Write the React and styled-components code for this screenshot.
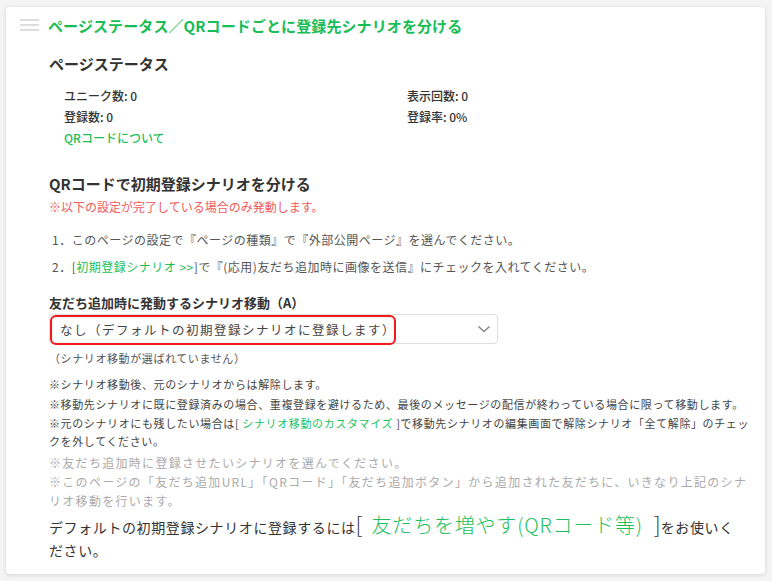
import React from 'react';
import styled, { createGlobalStyle } from 'styled-components';

const GlobalStyle = createGlobalStyle`
    html, body {
        margin: 0;
        padding: 0;
        background: #f4f4f4;
        font-family: "Noto Sans CJK JP", "Noto Sans", "Liberation Sans", sans-serif;
        color: #333;
    }
`;

const Page = styled.div`
    padding: 7px 7px 8px 6px;
`;

const Card = styled.section`
    width: 759px;
    box-sizing: border-box;
    background: #fff;
    border-radius: 4px;
    box-shadow: 0 1px 4px rgba(0, 0, 0, 0.14);
    padding-bottom: 12px;
`;

const Header = styled.header`
    display: flex;
    align-items: center;
    height: 36px;
    padding-left: 14px;
`;

const Burger = styled.div`
    display: flex;
    flex-direction: column;
    gap: 3px;
    width: 19px;
    margin-right: 9px;

    span {
        display: block;
        height: 2px;
        background: #dedede;
    }
`;

const Title = styled.h1`
    margin: 0;
    font-size: 15px;
    font-weight: 700;
    color: #19bd55;
    letter-spacing: 0.1px;
`;

const Body = styled.div`
    padding: 0 7px 0 43px;
`;

const SectionTitle = styled.h2`
    margin: ${(p) => p.$top || 0}px 0 0;
    font-size: 15px;
    line-height: 22px;
    font-weight: 700;
    color: #333;
`;

const Stats = styled.div`
    display: grid;
    grid-template-columns: 343px 1fr;
    padding-left: 15px;
    margin-top: 10px;
    font-size: 12px;
    line-height: 21px;
    font-weight: 500;
    color: #333;
`;

const GreenLink = styled.a`
    color: #1dbf5a;
    text-decoration: none;
    cursor: pointer;
`;

const Warn = styled.p`
    margin: 3px 0 0;
    font-size: 12px;
    line-height: 18px;
    color: #f05a5a;
`;

const Steps = styled.ol`
    list-style: none;
    margin: 14px 0 0;
    padding: 0 0 0 3px;
    font-size: 12px;
    letter-spacing: 0.5px;
    color: #555;

    li {
        line-height: 20px;
        margin-bottom: 7px;
    }
`;

const FieldLabel = styled.label`
    display: block;
    margin-top: 16px;
    font-size: 13px;
    line-height: 20px;
    font-weight: 700;
    color: #333;
`;

const Select = styled.div`
    position: relative;
    margin-top: 1px;
    width: 449px;
    height: 30px;
    box-sizing: border-box;
    border: 1px solid #ddd;
    border-radius: 4px;
    display: flex;
    align-items: center;
    padding-left: 10px;
    font-size: 12.5px;
    letter-spacing: 1.5px;
    color: #444;
`;

const Highlight = styled.span`
    position: absolute;
    left: 0;
    top: 0;
    width: 346px;
    height: 30px;
    box-sizing: border-box;
    border: 2px solid #f01c1c;
    border-radius: 6px;
    box-shadow: inset 0 0 3px rgba(0, 0, 0, 0.12);
`;

const Chevron = styled.svg`
    position: absolute;
    right: 6px;
    top: 9px;
`;

const Hint = styled.p`
    margin: 6px 0 0;
    font-size: 11px;
    line-height: 16px;
    letter-spacing: 0.6px;
    color: #555;
`;

const Notes = styled.div`
    margin-top: 9px;
    font-size: 11px;
    line-height: 18px;
    letter-spacing: 0.62px;
    color: #444;

    p {
        margin: 0 0 1.5px;
    }
`;

const GrayNotes = styled.div`
    margin-top: 3px;
    font-size: 12px;
    line-height: 19px;
    letter-spacing: 1.3px;
    color: #aaa;

    p {
        margin: 0;
    }
`;

const Footer = styled.p`
    margin: 5px 16px 0 0;
    font-size: 14px;
    line-height: 23px;
    letter-spacing: 0.6px;
    color: #333;
`;

const Bracket = styled.span`
    font-size: 22px;
    line-height: 16px;
    font-weight: 300;
    color: #333;
    letter-spacing: 0;
`;

const BigLink = styled(GreenLink)`
    font-size: 20px;
    line-height: 16px;
    font-weight: 300;
    letter-spacing: 0.8px;
    margin: 0 11px 0 9px;
`;

export default function App() {
    return (
        <>
            <GlobalStyle />
            <Page>
                <Card>
                    <Header>
                        <Burger>
                            <span />
                            <span />
                            <span />
                        </Burger>
                        <Title>ページステータス／QRコードごとに登録先シナリオを分ける</Title>
                    </Header>
                    <Body>
                        <SectionTitle $top={10}>ページステータス</SectionTitle>
                        <Stats>
                            <div>ユニーク数: 0</div>
                            <div>表示回数: 0</div>
                            <div>登録数: 0</div>
                            <div>登録率: 0%</div>
                            <div><GreenLink>QRコードについて</GreenLink></div>
                        </Stats>

                        <SectionTitle $top={25}>QRコードで初期登録シナリオを分ける</SectionTitle>
                        <Warn>※以下の設定が完了している場合のみ発動します。</Warn>
                        <Steps>
                            <li>1．このページの設定で『ページの種類』で『外部公開ページ』を選んでください。</li>
                            <li>2．[<GreenLink>初期登録シナリオ &gt;&gt;</GreenLink>]で『(応用)友だち追加時に画像を送信』にチェックを入れてください。</li>
                        </Steps>

                        <FieldLabel>友だち追加時に発動するシナリオ移動（A）</FieldLabel>
                        <Select>
                            なし（デフォルトの初期登録シナリオに登録します）
                            <Highlight />
                            <Chevron width="14" height="10" viewBox="0 0 14 10">
                                <path d="M1.5 2.5 L7 7.5 L12.5 2.5" fill="none" stroke="#888" strokeWidth="1.6" />
                            </Chevron>
                        </Select>
                        <Hint>（シナリオ移動が選ばれていません）</Hint>

                        <Notes>
                            <p>※シナリオ移動後、元のシナリオからは解除します。</p>
                            <p>※移動先シナリオに既に登録済みの場合、重複登録を避けるため、最後のメッセージの配信が終わっている場合に限って移動します。</p>
                            <p>※元のシナリオにも残したい場合は[ <GreenLink>シナリオ移動のカスタマイズ</GreenLink> ]で移動先シナリオの編集画面で解除シナリオ「全て解除」のチェックを外してください。</p>
                        </Notes>

                        <GrayNotes>
                            <p>※友だち追加時に登録させたいシナリオを選んでください。</p>
                            <p>※このページの「友だち追加URL」「QRコード」「友だち追加ボタン」から追加された友だちに、いきなり上記のシナリオ移動を行います。</p>
                        </GrayNotes>

                        <Footer>
                            デフォルトの初期登録シナリオに登録するには<Bracket>[</Bracket>
                            <BigLink>友だちを増やす(QRコード等)</BigLink>
                            <Bracket>]</Bracket>をお使いください。
                        </Footer>
                    </Body>
                </Card>
            </Page>
        </>
    );
}
